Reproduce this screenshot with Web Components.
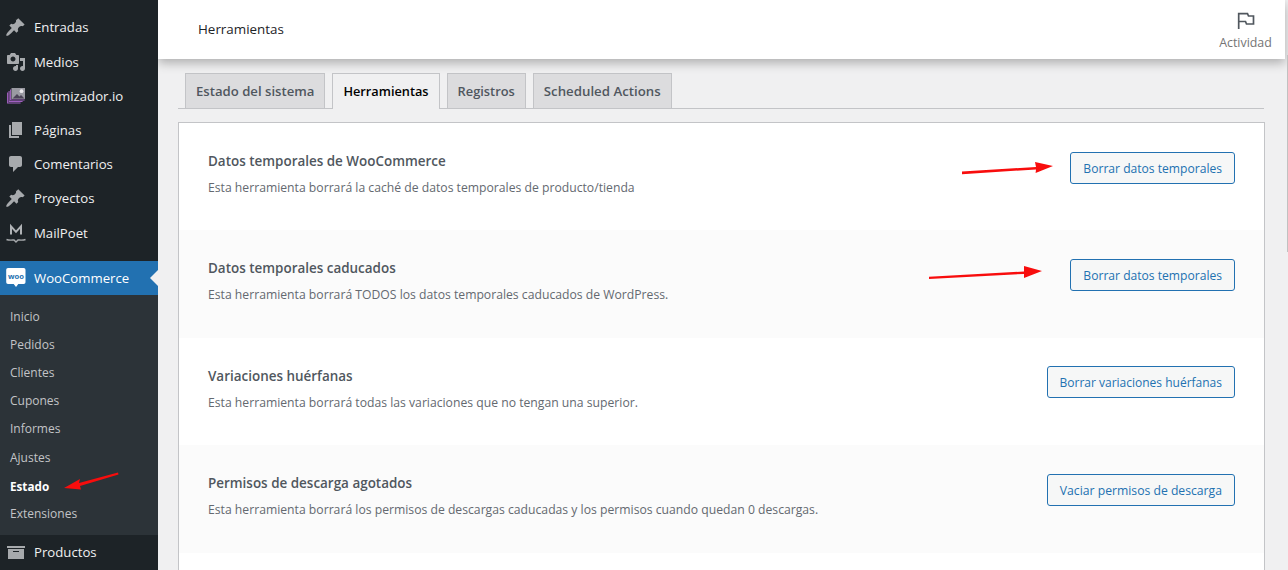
<!DOCTYPE html>
<html lang="es"><head><meta charset="utf-8">
<style>
html,body{margin:0;padding:0;height:570px;overflow:hidden;background:#f0f0f1}
body{font-family:"Open Sans","Noto Sans","Liberation Sans",sans-serif;font-size:13px}
</style></head><body>
<wp-shell>
  <wp-sidebar slot="side"></wp-sidebar>
  <wc-header slot="head"></wc-header>
  <wc-tabs slot="tabs"></wc-tabs>
  <tool-card slot="card">
    <tool-row style="--bf:12.100px" name="Datos temporales de WooCommerce" desc="Esta herramienta borrará la caché de datos temporales de producto/tienda" action="Borrar datos temporales"></tool-row>
    <tool-row style="--bf:12.100px" alt name="Datos temporales caducados" desc="Esta herramienta borrará TODOS los datos temporales caducados de WordPress." action="Borrar datos temporales"></tool-row>
    <tool-row style="--bf:12px" name="Variaciones huérfanas" desc="Esta herramienta borrará todas las variaciones que no tengan una superior." action="Borrar variaciones huérfanas"></tool-row>
    <tool-row style="--bf:12.200px" alt name="Permisos de descarga agotados" desc="Esta herramienta borrará los permisos de descargas caducadas y los permisos cuando quedan 0 descargas." action="Vaciar permisos de descarga"></tool-row>
  </tool-card>
</wp-shell>
<script>
const FONT='"Open Sans","Noto Sans","Liberation Sans",sans-serif';
class Shell extends HTMLElement{constructor(){super();this.attachShadow({mode:'open'}).innerHTML=`<style>
:host{display:flex;width:1288px;height:570px;overflow:hidden;position:relative}
.side{width:158px;flex:none;height:570px;overflow:hidden;position:relative;z-index:2}
.main{flex:1;min-width:0;display:flex;flex-direction:column}
.body{padding:14px 23px 0 20px;display:flex;flex-direction:column}
.sb{position:absolute;right:0;top:55px;width:1px;height:197px;background:#c1c1c1}
svg.arrows{position:absolute;left:0;top:0;pointer-events:none;z-index:3}
</style>
<div class="side"><slot name="side"></slot></div>
<div class="main"><slot name="head"></slot><div class="body"><slot name="tabs"></slot><slot name="card"></slot></div></div>
<div class="sb"></div>
<svg class="arrows" width="1288" height="570" fill="#f80d0d" stroke="none">
<path d="M962 171.6 L1036 167 L1035 162 L1053 166 L1035.6 173 L1036 169.4 L962 174.2Z"/>
<path d="M929 276.7 L1024 271.5 L1024 266 L1042 271 L1024 278 L1024 273.9 L929 279Z"/>
<path d="M118 472.6 L79 483 L80 479 L64 488 L81 489.5 L80 486 L118.5 474.5Z"/>
</svg>`}}
customElements.define('wp-shell',Shell);

const P={
pin:'M10.44 3.02l1.82-1.82 6.36 6.35-1.83 1.82c-1.05-.68-2.48-.57-3.41.36l-.75.75c-.92.93-1.04 2.35-.35 3.41l-1.83 1.82-2.41-2.41-2.89 2.89c-1.18 1.18-3.99 3.25-4.76 2.48-.77-.77 1.3-3.58 2.48-4.76l2.89-2.89-2.41-2.41 1.82-1.83c1.05.69 2.48.57 3.41-.35l.75-.75c.93-.93 1.04-2.36.36-3.41z',
media:'M13 11V4c0-.55-.45-1-1-1h-1.67L9 1H5L3.67 3H2c-.55 0-1 .45-1 1v7c0 .55.45 1 1 1h10c.55 0 1-.45 1-1zM7 4.5c1.38 0 2.5 1.12 2.5 2.5S8.38 9.5 7 9.5 4.5 8.38 4.5 7 5.62 4.5 7 4.5zM14 6h5v10.5c0 1.38-1.12 2.5-2.5 2.5S14 17.88 14 16.5s1.12-2.5 2.5-2.5c.17 0 .34.02.5.05V9h-3V6zm-4 8.05V13h2v3.500c0 1.380-1.120 2.500-2.500 2.500S7 17.880 7 16.500 8.120 14 9.500 14c.17 0 .34.02.5.05z',
pages:'M6 15V2h10v13H6zm-1 1h8v2H3V5h2v11z',
comment:'M5 2h9c1.100 0 2 .9 2 2v7c0 1.100-.9 2-2 2h-2l-5 5v-5H5c-1.100 0-2-.9-2-2V4c0-1.100.9-2 2-2z',
box:'M19 4v2H1V4h18zM2 7h16v10H2V7zm11 3V9H7v1h6z'
};
const ic=p=>`<svg width="20" height="20" viewBox="0 0 20 20" fill="#a7aaad"><path fill-rule="evenodd" d="${p}"/></svg>`;
const ICON={
pin:ic(P.pin),media:ic(P.media),pages:ic(P.pages),comment:ic(P.comment),box:ic(P.box),
opt:`<svg width="20" height="20" viewBox="0 0 20 20" fill="none"><path d="M1.600 6.500v10.500h13" stroke="#a060c0" stroke-width="1.100"/><path d="M3.100 5v10.500h13.500" stroke="#a060c0" stroke-width="1.100"/><path d="M4.600 3.500v10.500h14" stroke="#a060c0" stroke-width="1.100"/><rect x="5.500" y="2" width="13.500" height="11" fill="#9a9aa2"/><path d="M6.500 12.500l4.500-4.500 2.500 2.500 1.500-1.500 3.500 3.500z" fill="#4c4458"/><circle cx="15.500" cy="5.200" r="1.900" fill="#eceaee"/></svg>`,
mail:`<svg width="20" height="20" viewBox="0 0 20 20" fill="none" stroke="#b0b3b6"><path d="M5 11.500V3.300L10 8.800l5-5.500V11.500" stroke-width="2"/><path d="M.5 16.500C3 17.500 6.500 17 8 17l2 2 2-2c1.500 0 5 .5 7.500-.5" stroke-width="1.400" stroke="#a7aaad"/></svg>`,
woo:`<svg width="20" height="20" viewBox="0 0 20 20"><path d="M2 0h15.700a1.800 1.800 0 0 1 1.800 1.800v12.400a1.800 1.800 0 0 1-1.800 1.800h-5.400l-2.300 3-2.300-3H2a1.800 1.800 0 0 1-1.800-1.800V1.800A1.800 1.800 0 0 1 2 0z" fill="#fff"/><text x="9.900" y="10.700" text-anchor="middle" font-family="${FONT.replace(/"/g,"'")}" font-size="7.600" font-weight="700" fill="#2271b1">woo</text></svg>`
};
class Sidebar extends HTMLElement{constructor(){super();
const items=[['pin','Entradas'],['media','Medios'],['opt','optimizador.io'],['pages','Páginas'],['comment','Comentarios'],['pin','Proyectos'],['mail','MailPoet']];
const subs=['Inicio','Pedidos','Clientes','Cupones','Informes','Ajustes','Estado','Extensiones'];
this.attachShadow({mode:'open'}).innerHTML=`<style>
:host{display:block;width:158px;height:570px;background:#1d2327;color:#f0f0f1;font-family:${FONT};font-size:13.200px;overflow:hidden}
.top{padding-top:10.300px}
.it{display:flex;align-items:center;height:34.200px;color:#f0f0f1}
.ic{width:34px;flex:none;padding-left:6px;box-sizing:border-box}
.ic svg{display:block}
.gap{height:11.300px}
.cur{display:flex;align-items:center;height:34px;background:#2271b1;color:#fff;position:relative}
.cur:after{content:"";position:absolute;right:0;top:9px;border:8px solid transparent;border-right-color:#f0f0f1;border-left:0}
.sub{background:#2c3338;padding:8px 0 0;height:240px;box-sizing:border-box;display:flex;flex-direction:column}
.sub a{display:block;flex:none;height:28.140px;line-height:28.140px;padding-left:10px;font-size:12px;color:#c3c4c7}
.sub a.on{color:#fff;font-weight:700;font-size:11.700px}
</style><div class="top">${items.map(([i,t])=>`<div class="it"><span class="ic">${ICON[i]}</span><span>${t}</span></div>`).join('')}</div>
<div class="gap"></div>
<div class="cur"><span class="ic">${ICON.woo}</span><span>WooCommerce</span></div>
<div class="sub">${subs.map(s=>`<a class="${s=='Estado'?'on':''}">${s}</a>`).join('')}</div>
<div class="it"><span class="ic">${ICON.box}</span><span>Productos</span></div>`}}
customElements.define('wp-sidebar',Sidebar);

class Header extends HTMLElement{constructor(){super();this.attachShadow({mode:'open'}).innerHTML=`<style>
:host{display:flex;height:59px;background:#fff;align-items:stretch;justify-content:space-between;box-shadow:0 4px 10px rgba(0,0,0,.28);width:1127px;position:relative;font-family:${FONT};flex:none}
.t{padding:0 0 1px 40px;box-sizing:border-box;font-size:13.400px;color:#1d2327;display:flex;align-items:center;height:59px}
.a{display:flex;flex-direction:column;align-items:center;width:79px;padding-top:11px;box-sizing:border-box;font-size:12.400px;color:#757575}
svg{display:block;margin-bottom:3px}
</style><div class="t">Herramientas</div><div class="a"><svg width="20" height="20" viewBox="0 0 20 20" fill="none" stroke="#50575e" stroke-width="1.700"><path d="M2.700 18V2.700H11.500L12.500 5H17.500V13H10.500L9.500 10.500H2.700"/></svg><span>Actividad</span></div>`}}
customElements.define('wc-header',Header);

class Tabs extends HTMLElement{constructor(){super();this.attachShadow({mode:'open'}).innerHTML=`<style>
:host{display:flex;gap:7px;border-bottom:1px solid #c3c4c7;padding-left:7px;height:35px;font-family:${FONT};font-size:13.150px;font-weight:600;width:1079px;box-sizing:content-box}
a{display:block;height:35px;box-sizing:border-box;line-height:35px;padding:0 10px;border:1px solid #c3c4c7;border-bottom:none;background:#dcdcde;color:#50575e;white-space:nowrap}
a.on{background:#f0f0f1;color:#000;height:36px;margin-bottom:-1px;position:relative;font-size:12.750px}
a.r{font-size:12.850px}
a.s{font-size:13.250px}
</style><a>Estado del sistema</a><a class="on">Herramientas</a><a class="r">Registros</a><a class="s">Scheduled Actions</a>`}}
customElements.define('wc-tabs',Tabs);

class Card extends HTMLElement{constructor(){super();this.attachShadow({mode:'open'}).innerHTML=`<style>
:host{display:block;margin-top:13px;width:1087px;height:500px;box-sizing:border-box;background:#fff;border:1px solid #c3c4c7;border-bottom:none}
</style><slot></slot>`}}
customElements.define('tool-card',Card);

class Row extends HTMLElement{constructor(){super();const a=n=>this.getAttribute(n);this.attachShadow({mode:'open'}).innerHTML=`<style>
:host{display:flex;justify-content:space-between;height:107.400px;box-sizing:border-box;padding:20px 29px 0 29px;font-family:${FONT};background:#fff}
:host([alt]){background:#fbfbfb}
.n{font-size:13.450px;font-weight:600;color:#50575e;line-height:20px;margin-top:8px}
.d{font-size:12.200px;color:#646970;margin-top:8px;line-height:18px}
.b{height:32px;box-sizing:border-box;border:1px solid #2271b1;border-radius:3px;background:#f6f7f7;color:#2271b1;font-size:var(--bf,12.100px);line-height:31px;padding:0 12px;white-space:nowrap;margin-top:8.600px}
</style><div><div class="n">${a('name')}</div><div class="d">${a('desc')}</div></div><div class="b">${a('action')}</div>`}}
customElements.define('tool-row',Row);
</script></body></html>
